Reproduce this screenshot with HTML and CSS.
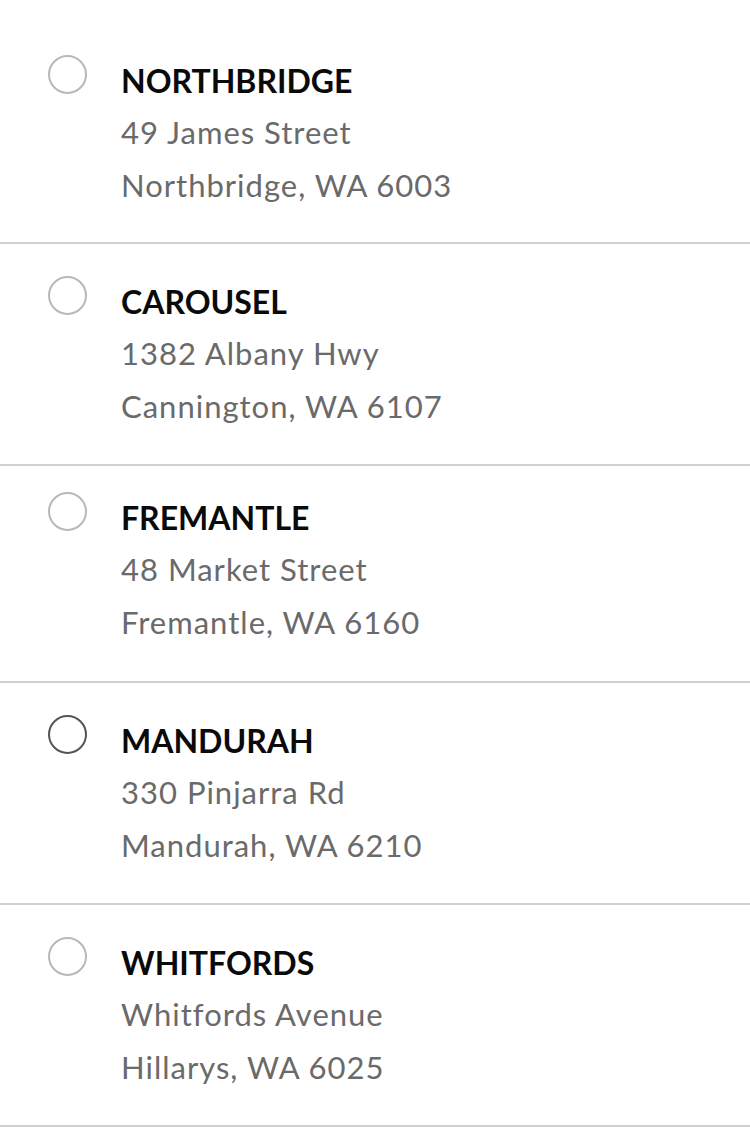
FILE: index.html
```html
<!DOCTYPE html>
<html lang="en">
<head>
<meta charset="utf-8">
<title>Stores</title>
<link rel="stylesheet" href="styles.css">
</head>
<body>
<ul class="store-list">
  <li class="store">
    <span class="radio"></span>
    <div class="store-info">
      <div class="store-name">NORTHBRIDGE</div>
      <div class="store-line">49 James Street</div>
      <div class="store-line">Northbridge, WA 6003</div>
    </div>
  </li>
  <li class="store">
    <span class="radio"></span>
    <div class="store-info">
      <div class="store-name">CAROUSEL</div>
      <div class="store-line">1382 Albany Hwy</div>
      <div class="store-line">Cannington, WA 6107</div>
    </div>
  </li>
  <li class="store store--tight">
    <span class="radio"></span>
    <div class="store-info">
      <div class="store-name">FREMANTLE</div>
      <div class="store-line">48 Market Street</div>
      <div class="store-line">Fremantle, WA 6160</div>
    </div>
  </li>
  <li class="store">
    <span class="radio radio--focus"></span>
    <div class="store-info">
      <div class="store-name">MANDURAH</div>
      <div class="store-line">330 Pinjarra Rd</div>
      <div class="store-line">Mandurah, WA 6210</div>
    </div>
  </li>
  <li class="store">
    <span class="radio"></span>
    <div class="store-info">
      <div class="store-name">WHITFORDS</div>
      <div class="store-line">Whitfords Avenue</div>
      <div class="store-line">Hillarys, WA 6025</div>
    </div>
  </li>
</ul>
</body>
</html>
```

FILE: styles.css
```css
* { box-sizing: border-box; }
html, body {
  margin: 0;
  padding: 0;
  background: #ffffff;
}
body {
  font-family: "Lato", "Liberation Sans", sans-serif;
  -webkit-font-smoothing: antialiased;
}
.store-list {
  list-style: none;
  margin: 0;
  padding: 23px 0 0 0;
}
.store {
  display: flex;
  align-items: flex-start;
  gap: 34px;
  padding: 32px 0 0 48px;
  height: 222px;
  border-bottom: 2px solid #d0d0d0;
}
.store:first-child {
  height: 221px;
}
.store--tight {
  padding-top: 26px;
  height: 217px;
}
.radio {
  flex: 0 0 auto;
  width: 39px;
  height: 39px;
  border: 2px solid #b8b8b8;
  border-radius: 50%;
}
.radio--focus {
  border-color: #555555;
}
.store-info {
  margin-top: 6px;
}
.store-name {
  font-size: 32px;
  line-height: 40px;
  font-weight: 700;
  color: #0a0a0a;
  margin-bottom: 5px;
}
.store-line {
  font-size: 31px;
  line-height: 53px;
  letter-spacing: 1px;
  color: #6a6a6a;
}
```
